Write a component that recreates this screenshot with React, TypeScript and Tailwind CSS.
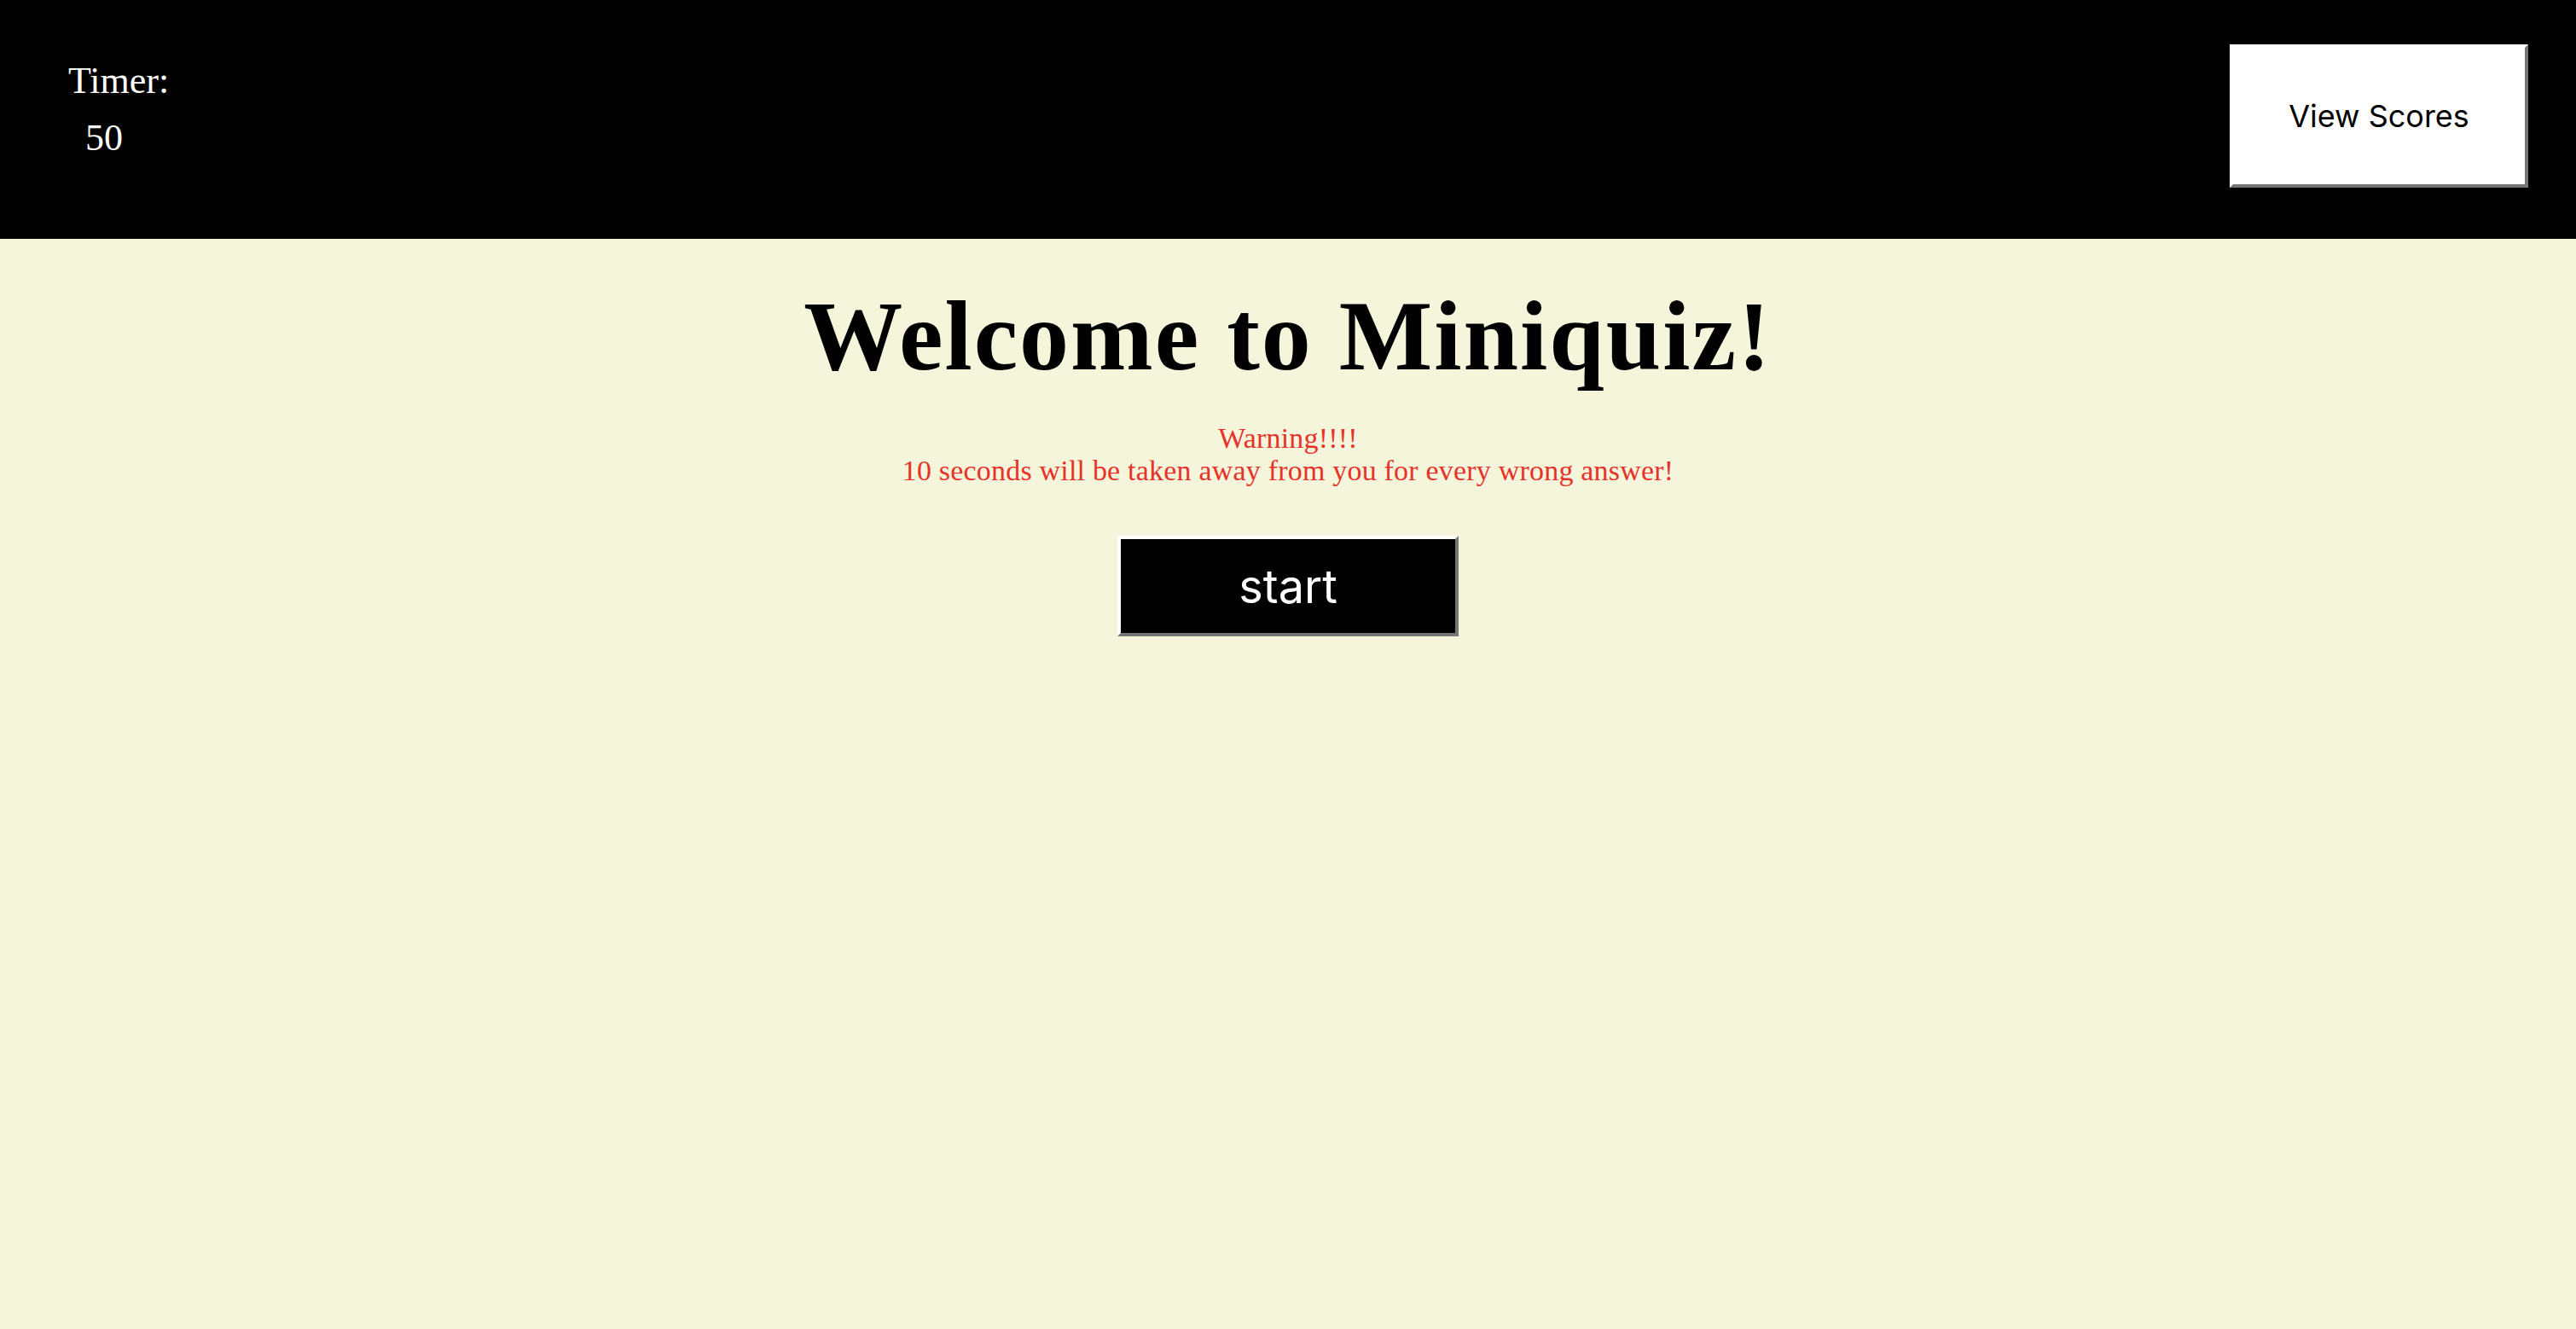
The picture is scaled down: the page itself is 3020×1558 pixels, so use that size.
export default function App() {
  return (
    <div className="flex min-h-screen w-full flex-col bg-[#f5f5dc] font-['Liberation_Serif',serif]">
      <header className="flex h-[280px] w-full flex-row items-start justify-between bg-black">
        <div className="flex flex-col pl-[80px] pt-[61px] text-[44px] leading-[67px] text-white">
          <span>Timer:</span>
          <span className="pl-[20px]">50</span>
        </div>
        <button className="mr-[56px] mt-[52px] h-[168px] w-[350px] border-4 border-b-[#767676] border-l-white border-r-[#767676] border-t-white bg-white font-['Inter',sans-serif] text-[36px] text-black">
          View Scores
        </button>
      </header>
      <main className="flex flex-col items-center text-center">
        <h1 className="mt-[44px] text-[116px] font-bold leading-[140px] tracking-[2px] text-black">
          Welcome to Miniquiz!
        </h1>
        <p className="mt-[31px] text-[34px] leading-[38px] tracking-[0.2px] text-[#e6332a]">
          Warning!!!!
          <br />
          10 seconds will be taken away from you for every wrong answer!
        </p>
        <button className="mt-[57px] h-[118px] w-[400px] border-4 border-b-[#767676] border-l-white border-r-[#767676] border-t-white bg-black font-['Inter',sans-serif] text-[54px] text-white">
          start
        </button>
      </main>
    </div>
  );
}
